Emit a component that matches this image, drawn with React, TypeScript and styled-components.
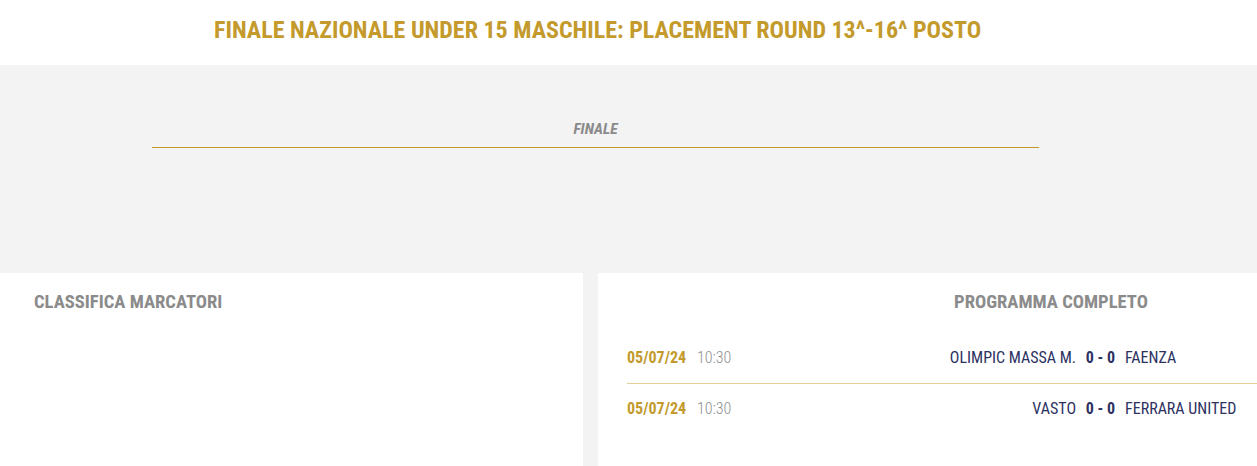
import React from "react";
import styled, { createGlobalStyle } from "styled-components";

const Global = createGlobalStyle`
  html, body { margin: 0; padding: 0; background: #ffffff; }
  body { font-family: "Roboto Condensed", Roboto, "Liberation Sans", sans-serif; font-stretch: 75%; overflow: hidden; }
  * { box-sizing: border-box; }
`;

const Page = styled.div`
  width: 1257px;
  height: 466px;
  display: flex;
  flex-direction: column;
  overflow: hidden;
`;

const Header = styled.header`
  height: 65px;
  padding-left: 214px;
  padding-bottom: 6px;
  display: flex;
  align-items: center;
`;

const Title = styled.h1`
  margin: 0;
  font-size: 24px;
  font-weight: 700;
  color: #c39a2b;
  line-height: 1;
  white-space: nowrap;
`;

const Bracket = styled.section`
  height: 208px;
  background: #f3f3f3;
  padding: 55px 0 0 152px;
`;

const Round = styled.div`
  width: 887px;
  display: flex;
  flex-direction: column;
  align-items: center;
`;

const RoundLabel = styled.div`
  font-size: 15.5px;
  font-style: italic;
  font-weight: 700;
  color: #8a8a8a;
  line-height: 18px;
  padding-bottom: 9px;
  width: 100%;
  text-align: center;
  border-bottom: 1px solid #c39a2b;
`;

const Bottom = styled.div`
  flex: 1;
  display: grid;
  grid-template-columns: 583px 906px;
  column-gap: 15px;
  background: #f3f3f3;
`;

const Panel = styled.div`
  background: #ffffff;
  padding-top: 17px;
`;

const PanelTitle = styled.h2<{ $center?: boolean }>`
  margin: 0;
  font-size: 18.6px;
  font-weight: 700;
  color: #8b8b8b;
  line-height: 24px;
  text-align: ${(p) => (p.$center ? "center" : "left")};
  padding-left: ${(p) => (p.$center ? "0" : "34px")};
`;

const Rows = styled.div`
  margin-top: 19px;
  padding-left: 29px;
`;

const Row = styled.div<{ $last?: boolean }>`
  height: ${(p) => (p.$last ? "50px" : "51px")};
  display: grid;
  grid-template-columns: 70px 60px 319px 49px 319px;
  align-items: center;
  font-size: 16px;
  line-height: 20px;
  border-bottom: ${(p) => (p.$last ? "none" : "1px solid #e3cf96")};
`;

const DateCell = styled.span`
  font-weight: 700;
  color: #c39a2b;
`;

const Time = styled.span`
  font-weight: 300;
  color: #8f8f8f;
`;

const Home = styled.span`
  text-align: right;
  color: #2c3161;
`;

const Score = styled.span`
  text-align: center;
  font-weight: 700;
  color: #2c3161;
`;

const Away = styled.span`
  color: #2c3161;
`;

const matches = [
  { date: "05/07/24", time: "10:30", home: "OLIMPIC MASSA M.", away: "FAENZA", score: "0 - 0" },
  { date: "05/07/24", time: "10:30", home: "VASTO", away: "FERRARA UNITED", score: "0 - 0" },
];

export default function App() {
  return (
    <Page>
      <Global />
      <Header>
        <Title>FINALE NAZIONALE UNDER 15 MASCHILE: PLACEMENT ROUND 13^-16^ POSTO</Title>
      </Header>
      <Bracket>
        <Round>
          <RoundLabel>FINALE</RoundLabel>
        </Round>
      </Bracket>
      <Bottom>
        <Panel>
          <PanelTitle>CLASSIFICA MARCATORI</PanelTitle>
        </Panel>
        <Panel>
          <PanelTitle $center>PROGRAMMA COMPLETO</PanelTitle>
          <Rows>
            {matches.map((m, i) => (
              <Row key={i} $last={i === matches.length - 1}>
                <DateCell>{m.date}</DateCell>
                <Time>{m.time}</Time>
                <Home>{m.home}</Home>
                <Score>{m.score}</Score>
                <Away>{m.away}</Away>
              </Row>
            ))}
          </Rows>
        </Panel>
      </Bottom>
    </Page>
  );
}
